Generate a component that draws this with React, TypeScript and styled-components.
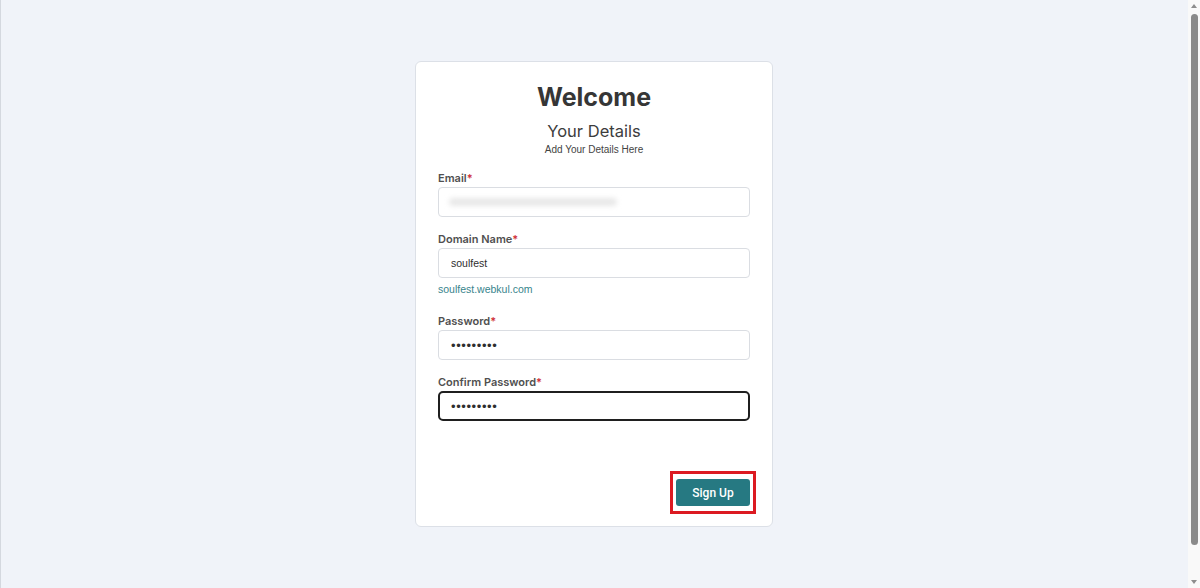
import { useEffect, useRef } from 'react';
import { createGlobalStyle, styled } from 'styled-components';

const GlobalStyle = createGlobalStyle`
  * {
    box-sizing: border-box;
  }
  body {
    margin: 0;
    background: #f0f3f9;
    font-family: Inter, 'Noto Sans', sans-serif;
    color: #3a3a3a;
    overflow: hidden;
  }
`;

const Shell = styled.div`
  height: 100vh;
  display: flex;
`;

const Page = styled.main`
  flex: 1;
  display: flex;
  justify-content: center;
  align-items: flex-start;
  padding-top: 61px;
  border-left: 1px solid #d4d8df;
`;

// fake browser scrollbar seen on the right of the screenshot
const ScrollBar = styled.div`
  width: 12px;
  background: #f9f9f9;
  display: flex;
  flex-direction: column;
  align-items: center;
  padding: 4px 0 4px;
`;

const Arrow = styled.div<{ $down?: boolean }>`
  width: 0;
  height: 0;
  border-left: 3.5px solid transparent;
  border-right: 3.5px solid transparent;
  ${(p) =>
    p.$down
      ? 'border-top: 4px solid #8d8d8d;'
      : 'border-bottom: 4px solid #8d8d8d;'}
`;

const Thumb = styled.div`
  flex: 1;
  width: 7px;
  margin: 6px 0 35px;
  border-radius: 4px;
  background: #8a8a8a;
`;

const Card = styled.form`
  width: 358px;
  margin-left: -1px;
  background: #fff;
  border: 1px solid #dce0e7;
  border-radius: 6px;
  padding: 20px 22px 12px;
  display: flex;
  flex-direction: column;
`;

const Title = styled.h1`
  margin: 0;
  text-align: center;
  font-size: 25px;
  line-height: 30px;
  font-weight: 700;
  color: #363636;
`;

const Subtitle = styled.h2`
  margin: 9px 0 0;
  text-align: center;
  font-size: 16.5px;
  line-height: 20px;
  font-weight: 400;
  color: #3d3d3d;
`;

const Caption = styled.p`
  margin: 3px 0 0;
  text-align: center;
  font-family: 'Liberation Sans', Arial, sans-serif;
  font-size: 10px;
  line-height: 12px;
  color: #444;
`;

const Fields = styled.div`
  margin-top: 15px;
  display: flex;
  flex-direction: column;
`;

const Field = styled.div<{ $gap?: number }>`
  display: flex;
  flex-direction: column;
  margin-top: ${(p) => p.$gap ?? 0}px;
`;

const Label = styled.label`
  font-size: 11px;
  line-height: 15px;
  font-weight: 600;
  color: #505050;
  margin-bottom: 1px;
  span {
    color: #d0323a;
  }
`;

const Input = styled.input<{ $active?: boolean; $secret?: boolean }>`
  width: 100%;
  height: 30px;
  padding: 0 0 0 ${(p) => (p.$active ? '11px' : '12px')};
  border: ${(p) => (p.$active ? '2px solid #1f1f1f' : '1px solid #dadde2')};
  border-radius: ${(p) => (p.$active ? '5px' : '4px')};
  font-family: 'Liberation Sans', Arial, sans-serif;
  font-size: ${(p) => (p.$secret ? '13px' : '10.5px')};
  letter-spacing: ${(p) => (p.$secret ? '0.6px' : '0')};
  color: #2e2e2e;
  background: #fff;
  outline: none;
`;

const MaskedBox = styled.div`
  height: 30px;
  padding: 0 10px;
  display: flex;
  align-items: center;
  border: 1px solid #dadde2;
  border-radius: 4px;
  background: #fff;
  overflow: hidden;
`;

const Blurred = styled.span`
  background: #e8e8e8;
  filter: blur(2.5px);
  width: 168px;
  height: 8px;
  border-radius: 4px;
`;

const Hint = styled.div`
  margin-top: 5px;
  font-family: 'Liberation Sans', Arial, sans-serif;
  font-size: 10.5px;
  line-height: 12px;
  color: #37848c;
`;

const Footer = styled.div`
  margin-top: 50px;
  margin-right: -6px;
  display: flex;
  justify-content: flex-end;
`;

const Highlight = styled.div`
  border: 3px solid #dc1a22;
  padding: 5px 3px;
  display: flex;
`;

const Button = styled.button`
  width: 74px;
  height: 27px;
  border: none;
  border-radius: 3px;
  background: #267982;
  color: #fff;
  font-family: Roboto, 'Liberation Sans', sans-serif;
  font-size: 12px;
  font-weight: 500;
  cursor: pointer;
`;

function App() {
  const confirmRef = useRef<HTMLInputElement>(null);

  useEffect(() => {
    const el = confirmRef.current;
    if (el) {
      el.focus();
      el.setSelectionRange(el.value.length, el.value.length);
    }
  }, []);

  return (
    <>
      <GlobalStyle />
      <Shell>
        <Page>
          <Card onSubmit={(e) => e.preventDefault()}>
            <Title>Welcome</Title>
            <Subtitle>Your Details</Subtitle>
            <Caption>Add Your Details Here</Caption>
            <Fields>
              <Field>
                <Label>
                  Email<span>*</span>
                </Label>
                <MaskedBox>
                  <Blurred />
                </MaskedBox>
              </Field>
              <Field $gap={15}>
                <Label>
                  Domain Name<span>*</span>
                </Label>
                <Input type="text" defaultValue="soulfest" readOnly />
                <Hint>soulfest.webkul.com</Hint>
              </Field>
              <Field $gap={19}>
                <Label>
                  Password<span>*</span>
                </Label>
                <Input $secret type="password" defaultValue="123456789" readOnly />
              </Field>
              <Field $gap={15}>
                <Label>
                  Confirm Password<span>*</span>
                </Label>
                <Input
                  ref={confirmRef}
                  $active
                  $secret
                  type="password"
                  defaultValue="123456789"
                />
              </Field>
            </Fields>
            <Footer>
              <Highlight>
                <Button type="submit">Sign Up</Button>
              </Highlight>
            </Footer>
          </Card>
        </Page>
        <ScrollBar>
          <Arrow />
          <Thumb />
          <Arrow $down />
        </ScrollBar>
      </Shell>
    </>
  );
}

export default App;
